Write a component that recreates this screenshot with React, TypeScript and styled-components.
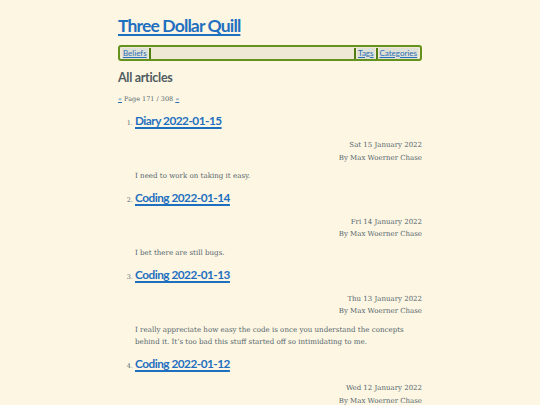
import React from "react";
import styled, { createGlobalStyle } from "styled-components";

const Global = createGlobalStyle`
  html, body { margin: 0; padding: 0; background: #fdf6e3; }
  body { font-family: "DejaVu Serif", "Liberation Serif", serif; color: #56676d; }
`;

const Page = styled.div`
  width: 304px;
  margin: 0 auto;
  padding-top: 14px;
`;

const Title = styled.h1`
  margin: 0;
  font-family: "Lato", "Open Sans", sans-serif;
  font-weight: 700;
  font-size: 17.5px;
  letter-spacing: -0.85px;
  line-height: 24px;
  a { color: #1f6fc0; text-decoration: underline; text-underline-offset: 2px; text-decoration-thickness: 1.5px; }
`;

const Nav = styled.nav`
  margin-top: 7px;
  height: 12px;
  border: 2px solid #64921c;
  border-radius: 3px;
  background: #eee8d5;
  display: flex;
  align-items: center;
  padding: 0 2px;
  font-family: "Lato", "Open Sans", sans-serif;
  font-size: 8px;
`;

const NavLink = styled.a`
  color: #2a6fb5;
  text-decoration: underline;
  padding: 0 1px;
  line-height: 11px;
  background: #dfe0d6;
`;

const Sep = styled.span`
  width: 2px;
  height: 11px;
  background: #4f7d12;
  margin: 0 1px;
`;

const Spacer = styled.div`
  flex: 1;
`;

const Heading = styled.h2`
  margin: 8px 0 0;
  font-family: "Lato", "Open Sans", sans-serif;
  font-weight: 700;
  font-size: 12.5px;
  letter-spacing: -0.3px;
  line-height: 18px;
  color: #505c61;
`;

const Pager = styled.p`
  margin: 7px 0 0;
  font-size: 6.5px;
  line-height: 10px;
  a { color: #2a6fb5; }
`;

const List = styled.ol`
  margin: 8px 0 0;
  padding-left: 17px;
`;

const Item = styled.li`
  font-size: 6.5px;
  margin-bottom: 6.4px;
  &::marker { color: #586e75; }
`;

const ItemTitle = styled.h3`
  display: inline;
  margin: 0;
  font-family: "Lato", "Open Sans", sans-serif;
  font-weight: 700;
  font-size: 11.8px;
  letter-spacing: -0.5px;
  line-height: 18px;
  a { color: #1f6fc0; text-decoration-thickness: 1.5px; text-underline-offset: 2px; }
`;

const Meta = styled.div`
  margin-top: 9px;
  text-align: right;
  font-size: 7px;
  line-height: 12.5px;
`;

const Body = styled.p`
  margin: 6px 0 0;
  font-size: 7.1px;
  line-height: 12.5px;
`;

const articles = [
  { title: "Diary 2022-01-15", date: "Sat 15 January 2022", body: "I need to work on taking it easy." },
  { title: "Coding 2022-01-14", date: "Fri 14 January 2022", body: "I bet there are still bugs." },
  { title: "Coding 2022-01-13", date: "Thu 13 January 2022", body: "I really appreciate how easy the code is once you understand the concepts behind it. It’s too bad this stuff started off so intimidating to me." },
  { title: "Coding 2022-01-12", date: "Wed 12 January 2022", body: "" },
];

export default function App() {
  return (
    <>
      <Global />
      <Page>
        <Title><a href="#">Three Dollar Quill</a></Title>
        <Nav>
          <NavLink href="#">Beliefs</NavLink>
          <Sep />
          <Spacer />
          <Sep />
          <NavLink href="#">Tags</NavLink>
          <Sep />
          <NavLink href="#">Categories</NavLink>
        </Nav>
        <Heading>All articles</Heading>
        <Pager><a href="#">«</a> Page 171 / 308 <a href="#">»</a></Pager>
        <List>
          {articles.map((a) => (
            <Item key={a.title}>
              <ItemTitle><a href="#">{a.title}</a></ItemTitle>
              <Meta>
                {a.date}
                <br />
                By Max Woerner Chase
              </Meta>
              {a.body && <Body>{a.body}</Body>}
            </Item>
          ))}
        </List>
      </Page>
    </>
  );
}
